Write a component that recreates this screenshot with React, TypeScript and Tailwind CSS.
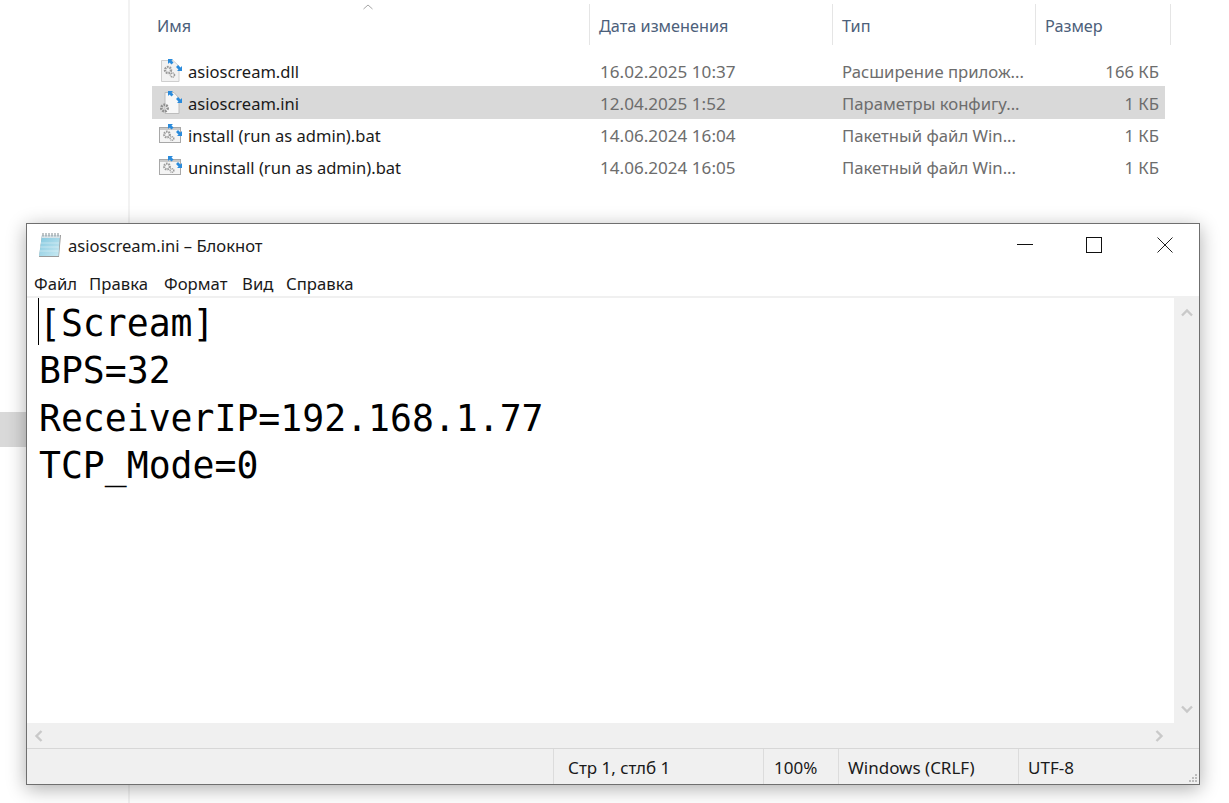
const ui = { fontFamily: '"Noto Sans", "Open Sans", sans-serif' };

function Gear({ x, y, r, c = "#9a9a9a" }: { x: number; y: number; r: number; c?: string }) {
  return <circle cx={x} cy={y} r={r} fill="none" stroke={c} strokeWidth={r * 0.8} strokeDasharray={`${r * 0.55} ${r * 0.3}`} />;
}

function Arrows() {
  return (
    <g fill="#2a8bdc">
      <path d="M8 0 L13 0 L11.5 1.5 L13.5 3.5 L11.5 5.5 L9.5 3.5 L8 5 Z" />
      <path d="M22 12 L17 12 L18.5 10.5 L16 8 L18 6 L20.5 8.5 L22 7 Z" />
    </g>
  );
}

function DllIcon() {
  return (
    <svg width="22" height="24" viewBox="0 0 22 24" className="block">
      <path d="M1.5 1.5 H13 L19 7 V22.5 H1.5 Z" fill="#f2f2f2" stroke="#cfcfcf" />
      <Gear x={8} y={11} r={3} />
      <Gear x={12.5} y={16} r={2} />
      <Arrows />
    </svg>
  );
}

function IniIcon() {
  return (
    <svg width="22" height="24" viewBox="0 0 22 24" className="block">
      <path d="M5 1.5 H14 L19 7 V22.5 H5 Z" fill="#f7f7f7" stroke="#bdbdbd" />
      <Gear x={4.5} y={17} r={3.2} c="#8f8f8f" />
      <Arrows />
    </svg>
  );
}

function BatIcon() {
  return (
    <svg width="24" height="22" viewBox="0 0 24 22" className="block">
      <rect x="0.5" y="3.5" width="21" height="15" fill="#f4f4f4" stroke="#a8a8a8" />
      <rect x="1" y="4" width="20" height="2" fill="#c9c9c9" />
      <Gear x={8} y={10.5} r={2.8} />
      <Gear x={13} y={14.5} r={1.8} />
      <g transform="translate(1 0)">
        <Arrows />
      </g>
    </svg>
  );
}

function NotepadIcon() {
  return (
    <svg width="24" height="26" viewBox="0 0 24 26" className="block">
      <path d="M4 3 H23 L21 25 H1 Z" fill="#6f6f6f" opacity="0.7" />
      <path d="M4 3 H22 L20.5 24 H1 Z" fill="url(#np)" />
      <path d="M2 11 H21 M1.7 15 H20.8 M1.4 19 H20.5" stroke="#ffffff" strokeOpacity="0.4" />
      <path d="M4 3 H22 L21.8 6 H3.7 Z" fill="#d9e4e9" />
      <path d="M5 1 V4.5 M8 1 V4.5 M11 1 V4.5 M14 1 V4.5 M17 1 V4.5 M20 1 V4.5" stroke="#7f8b90" strokeWidth="1" />
      <defs>
        <linearGradient id="np" x1="0" y1="0" x2="1" y2="1">
          <stop offset="0" stopColor="#7fc6de" />
          <stop offset="1" stopColor="#c9e9f2" />
        </linearGradient>
      </defs>
    </svg>
  );
}

function Chevron({ d, className }: { d: string; className: string }) {
  return (
    <svg width="12" height="12" viewBox="0 0 12 12" className={className}>
      <path d={d} fill="none" stroke="#c9c9c9" strokeWidth="2.4" />
    </svg>
  );
}

const files = [
  { name: "asioscream.dll", date: "16.02.2025 10:37", type: "Расширение прилож...", size: "166 КБ", icon: <DllIcon />, sel: false },
  { name: "asioscream.ini", date: "12.04.2025 1:52", type: "Параметры конфигу...", size: "1 КБ", icon: <IniIcon />, sel: true },
  { name: "install (run as admin).bat", date: "14.06.2024 16:04", type: "Пакетный файл Win...", size: "1 КБ", icon: <BatIcon />, sel: false },
  { name: "uninstall (run as admin).bat", date: "14.06.2024 16:05", type: "Пакетный файл Win...", size: "1 КБ", icon: <BatIcon />, sel: false },
];

const lines = ["[Scream]", "BPS=32", "ReceiverIP=192.168.1.77", "TCP_Mode=0"];

export default function App() {
  return (
    <div className="relative h-[803px] w-[1229px] overflow-hidden bg-white text-[16px]" style={ui}>
      <div className="absolute left-0 top-[412px] h-[35px] w-[26px] bg-[#d9d9d9]" />

      <div className="ml-[128px] h-full border-l-2 border-[#f2f2f2]">
        <div className="relative">
          <svg width="12" height="6" viewBox="0 0 12 6" className="absolute left-[232px] top-[4px]">
            <path d="M1.5 5 L6 1 L10.5 5" fill="none" stroke="#a6a6a6" strokeWidth="1" />
          </svg>
          <div className="flex h-[41px] translate-y-[4px] items-center text-[16.25px] leading-[44px] text-[#4c607a]">
            <div className="h-full w-[460px] border-r border-[#e5e5e5] pl-[27px]">Имя</div>
            <div className="h-full w-[243px] border-r border-[#e5e5e5] pl-[9px]">Дата изменения</div>
            <div className="h-full w-[203px] border-r border-[#e5e5e5] pl-[9px]">Тип</div>
            <div className="h-full w-[135px] border-r border-[#e5e5e5] pl-[9px]">Размер</div>
          </div>
        </div>

        <div className="ml-[22px] mt-[14px] w-[1013px]">
          {files.map((f) => (
            <div
              key={f.name}
              className={`flex items-center ${f.sel ? "-mt-px h-[33px] bg-[#d9d9d9]" : "h-[32px]"}`}
            >
              <div className="flex w-[36px] justify-center pl-[2px]">{f.icon}</div>
              <div className={`w-[412px] whitespace-nowrap text-[16.55px] text-[#1a1a1a] ${f.sel ? "pt-[3px]" : "pt-[2px]"}`}>{f.name}</div>
              <div className={`w-[242px] whitespace-nowrap text-[17.1px] text-[#6d6d6d] ${f.sel ? "pt-[3px]" : "pt-[2px]"}`}>{f.date}</div>
              <div className={`flex-1 whitespace-nowrap text-[16.7px] text-[#6d6d6d] ${f.sel ? "pt-[3px]" : "pt-[2px]"}`}>{f.type}</div>
              <div className={`whitespace-nowrap pr-[6px] text-right text-[16.7px] text-[#6d6d6d] ${f.sel ? "pt-[3px]" : "pt-[2px]"}`}>{f.size}</div>
            </div>
          ))}
        </div>
      </div>

      <div className="absolute left-[26px] top-[223px] flex h-[562px] w-[1174px] flex-col border border-[#6f6f6f] bg-white shadow-[0_4px_18px_rgba(0,0,0,0.32)]">
        <div className="flex h-[42px] shrink-0 items-center">
          <div className="ml-[11px] mr-[6px]">
            <NotepadIcon />
          </div>
          <div className="pt-[2px] text-[16.6px] text-[#1a1a1a]">asioscream.ini – Блокнот</div>
          <div className="ml-auto flex items-center">
            <svg width="16" height="16" viewBox="0 0 16 16" className="mr-[53px]">
              <path d="M0 7.5 H16" stroke="#111" />
            </svg>
            <svg width="16" height="16" viewBox="0 0 16 16" className="mr-[55px]">
              <rect x="0.5" y="0.5" width="15" height="15" fill="none" stroke="#111" />
            </svg>
            <svg width="16" height="16" viewBox="0 0 16 16" className="mr-[26px]">
              <path d="M0.5 0.5 L15.5 15.5 M15.5 0.5 L0.5 15.5" stroke="#222" />
            </svg>
          </div>
        </div>

        <div className="flex h-[30px] shrink-0 items-center gap-[14px] pl-[7px] pt-[6px] text-[16.7px] text-[#1a1a1a]">
          <span className="-mr-[2px]">Файл</span>
          <span className="w-[61px]">Правка</span>
          <span className="w-[64px]">Формат</span>
          <span className="w-[30px]">Вид</span>
          <span>Справка</span>
        </div>

        <div className="flex min-h-0 flex-1 border-t-2 border-[#f0f0f0]">
          <div className="relative flex-1 pl-[12px] pt-[2px] font-['DejaVu_Sans_Mono',monospace] text-[36.45px] leading-[47.3px] text-black">
            <div className="absolute left-[11px] top-0 h-[47px] w-px bg-black" />
            {lines.map((l) => (
              <div key={l} className="whitespace-pre">
                {l}
              </div>
            ))}
          </div>
          <div className="flex w-[25px] flex-col items-center justify-between bg-[#f0f0f0] pb-[8px] pt-[9px]">
            <Chevron d="M1 8.5 L6 3.5 L11 8.5" className="block" />
            <Chevron d="M1 3.5 L6 8.5 L11 3.5" className="block" />
          </div>
        </div>

        <div className="flex h-[25px] shrink-0 items-center justify-between bg-[#f0f0f0] pl-[6px] pr-[34px]">
          <Chevron d="M8.5 1 L3.5 6 L8.5 11" className="block" />
          <Chevron d="M3.5 1 L8.5 6 L3.5 11" className="block" />
        </div>

        <div className="relative flex h-[36px] shrink-0 border-t border-[#d7d7d7] bg-[#f0f0f0] text-[17px] text-[#1a1a1a]">
          <div className="w-[527px] border-r border-[#dcdcdc]" />
          <div className="flex w-[210px] items-center border-r border-[#dcdcdc] pl-[14px] pt-[2px]">Стр 1, стлб 1</div>
          <div className="flex w-[75px] items-center border-r border-[#dcdcdc] pl-[10px] pt-[2px]">100%</div>
          <div className="flex w-[180px] items-center border-r border-[#dcdcdc] pl-[9px] pt-[2px]">Windows (CRLF)</div>
          <div className="flex items-center pl-[9px] pt-[2px]">UTF-8</div>
          <svg width="10" height="10" viewBox="0 0 10 10" className="absolute bottom-[1px] right-[1px]">
            <path d="M7 1h2v2H7zM4 4h2v2H4zM7 4h2v2H7zM1 7h2v2H1zM4 7h2v2H4zM7 7h2v2H7z" fill="#bdbdbd" />
          </svg>
        </div>
      </div>
    </div>
  );
}
